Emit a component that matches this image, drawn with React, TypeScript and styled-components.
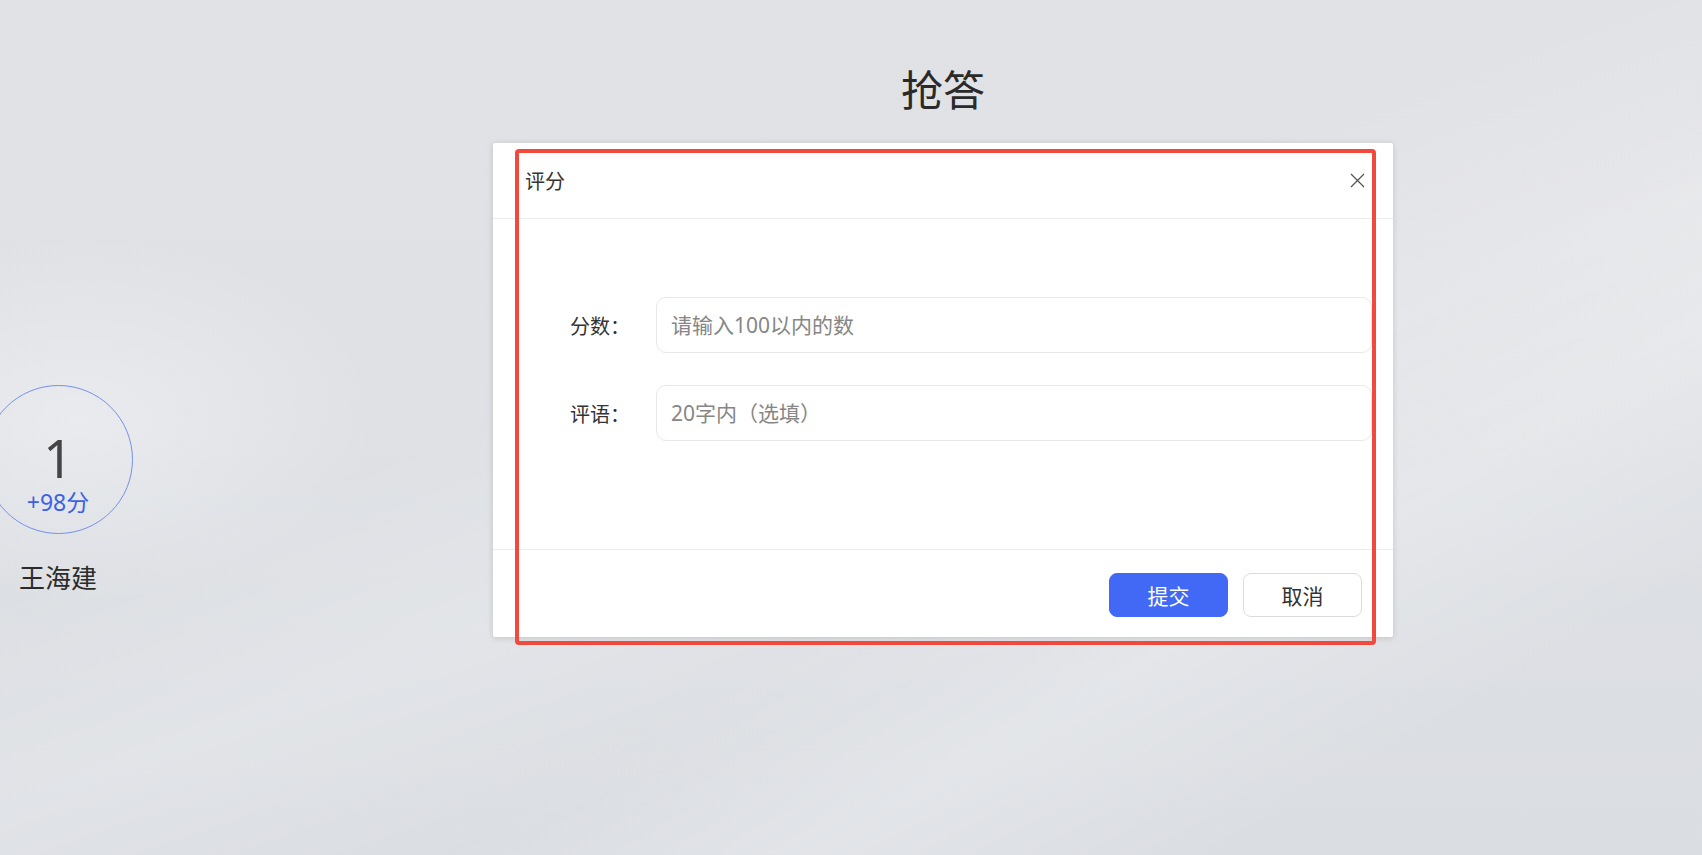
import React from "react";
import styled, { createGlobalStyle } from "styled-components";

const GlobalStyle = createGlobalStyle`
  html, body {
    margin: 0;
    padding: 0;
  }
  body {
    font-family: "Noto Sans", "Noto Sans CJK SC", sans-serif;
    color: #333;
  }
  * {
    box-sizing: border-box;
  }
`;

const Page = styled.div`
  display: flex;
  width: 100%;
  height: 855px;
  overflow: hidden;
  background-color: #e0e2e6;
  background-image:
    radial-gradient(ellipse 420px 260px at 80px 420px, rgba(236, 238, 241, 0.75), rgba(236, 238, 241, 0) 70%),
    linear-gradient(160deg, rgba(255, 255, 255, 0) 40%, rgba(255, 255, 255, 0.18) 55%, rgba(255, 255, 255, 0) 70%),
    linear-gradient(150deg, rgba(255, 255, 255, 0) 60%, rgba(255, 255, 255, 0.22) 72%, rgba(255, 255, 255, 0) 85%),
    linear-gradient(180deg, #e1e2e6 0%, #dfe1e5 45%, #dadde2 100%);
`;

const Sidebar = styled.aside`
  width: 184px;
  flex-shrink: 0;
  display: flex;
  flex-direction: column;
  padding-top: 385px;
`;

const RankItem = styled.div`
  width: 116px;
  display: flex;
  flex-direction: column;
  align-items: center;
`;

const RankCircle = styled.div`
  width: 149px;
  height: 149px;
  flex-shrink: 0;
  border-radius: 50%;
  border: 1px solid #7690ef;
  display: flex;
  flex-direction: column;
  align-items: center;
  padding-top: 50px;
`;

const RankNumber = styled.div`
  font-size: 52px;
  line-height: 44px;
  color: #454545;
`;

const RankScore = styled.div`
  margin-top: 9px;
  font-size: 23px;
  line-height: 26px;
  color: #3d5fe6;
`;

const RankName = styled.div`
  margin-top: 29px;
  font-size: 26px;
  line-height: 31px;
  color: #2b2b2b;
  white-space: nowrap;
`;

const Main = styled.main`
  flex: 1;
  display: flex;
  flex-direction: column;
  align-items: center;
  padding-top: 65px;
`;

const Title = styled.h1`
  margin: 0;
  font-size: 42px;
  line-height: 50px;
  font-weight: 400;
  color: #2a2a2a;
`;

const Dialog = styled.section`
  position: relative;
  width: 900px;
  margin-top: 28px;
  background: #fff;
  border-radius: 2px;
  box-shadow: 0 1px 6px rgba(0, 0, 0, 0.14);
`;

const DialogHeader = styled.header`
  height: 76px;
  display: flex;
  align-items: center;
  justify-content: space-between;
  padding: 0 28px 0 32px;
  border-bottom: 1px solid #ececec;
`;

const DialogTitle = styled.h2`
  margin: 0;
  font-size: 20px;
  font-weight: 400;
  color: #333;
`;

const CloseButton = styled.button`
  width: 15px;
  height: 15px;
  padding: 0;
  border: none;
  background: transparent;
  display: flex;
  align-items: center;
  justify-content: center;
  cursor: pointer;
  color: #555;
`;

const DialogBody = styled.div`
  height: 330px;
  padding: 78px 21px 0 77px;
`;

const FormRow = styled.div`
  display: flex;
  align-items: center;
  margin-bottom: 32px;
`;

const FormLabel = styled.label`
  width: 60px;
  margin-right: 26px;
  font-size: 20px;
  color: #333;
  white-space: nowrap;
`;

const TextInput = styled.input`
  flex: 1;
  height: 56px;
  padding: 0 14px;
  border: 1px solid #e8e8e8;
  border-radius: 10px;
  font-family: "Noto Sans", "Noto Sans CJK SC", sans-serif;
  font-size: 21px;
  color: #333;
  outline: none;
  background: #fff;
  &::placeholder {
    color: #868686;
  }
`;

const DialogFooter = styled.footer`
  height: 88px;
  display: flex;
  align-items: flex-start;
  justify-content: flex-end;
  gap: 15px;
  padding: 23px 31px 0 0;
  border-top: 1px solid #ececec;
`;

const Button = styled.button<{ $primary?: boolean }>`
  width: 119px;
  height: 44px;
  border-radius: 8px;
  font-family: "Noto Sans", "Noto Sans CJK SC", sans-serif;
  font-size: 21px;
  cursor: pointer;
  border: 1px solid ${(p) => (p.$primary ? "#4169f5" : "#dcdcdc")};
  background: ${(p) => (p.$primary ? "#4169f5" : "#fff")};
  color: ${(p) => (p.$primary ? "#fff" : "#333")};
`;

const Annotation = styled.div`
  position: absolute;
  left: 22px;
  top: 6px;
  width: 861px;
  height: 496px;
  border: 4px solid #f04a3f;
  border-radius: 4px;
  pointer-events: none;
`;

export default function App() {
  return (
    <>
      <GlobalStyle />
      <Page>
        <Sidebar>
          <RankItem>
            <RankCircle>
              <RankNumber>1</RankNumber>
              <RankScore>+98分</RankScore>
            </RankCircle>
            <RankName>王海建</RankName>
          </RankItem>
        </Sidebar>
        <Main>
          <Title>抢答</Title>
          <Dialog>
            <DialogHeader>
              <DialogTitle>评分</DialogTitle>
              <CloseButton aria-label="关闭">
                <svg width="15" height="15" viewBox="0 0 15 15">
                  <path d="M1 1 L14 14 M14 1 L1 14" stroke="currentColor" strokeWidth="1.3" fill="none" />
                </svg>
              </CloseButton>
            </DialogHeader>
            <DialogBody>
              <FormRow>
                <FormLabel>分数：</FormLabel>
                <TextInput placeholder="请输入100以内的数" />
              </FormRow>
              <FormRow>
                <FormLabel>评语：</FormLabel>
                <TextInput placeholder="20字内（选填）" />
              </FormRow>
            </DialogBody>
            <DialogFooter>
              <Button $primary>提交</Button>
              <Button>取消</Button>
            </DialogFooter>
            <Annotation />
          </Dialog>
        </Main>
      </Page>
    </>
  );
}
